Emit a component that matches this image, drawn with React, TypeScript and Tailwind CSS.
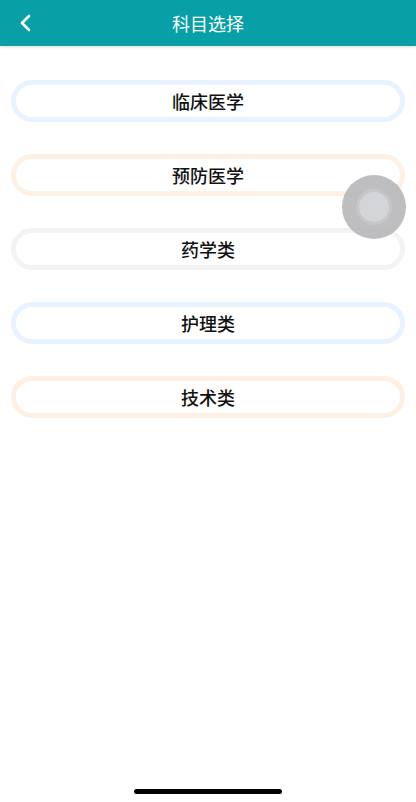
const subjects = [
  { name: '临床医学', ring: 'border-[#e9f2ff]' },
  { name: '预防医学', ring: 'border-[#fdf1e6]' },
  { name: '药学类', ring: 'border-[#f3f3f3]' },
  { name: '护理类', ring: 'border-[#e9f2ff]' },
  { name: '技术类', ring: 'border-[#fdf1e6]' },
]

function App() {
  return (
    <div
      className="relative w-[416px] h-[802px] bg-white overflow-hidden"
      style={{ fontFamily: '"Noto Sans CJK SC", "Noto Sans", sans-serif' }}
    >
      {/* Header */}
      <header className="relative flex items-center justify-center h-[46px] bg-[#089fa6] shadow-[0_1px_3px_rgba(0,0,0,0.15)]">
        <button className="absolute left-[14px] top-[11px] flex items-center justify-center w-6 h-6">
          <svg width="16" height="18" viewBox="0 0 16 18" fill="none" stroke="#fff" strokeWidth="2.6" strokeLinecap="round" strokeLinejoin="round">
            <path d="M11 2 L4 9 L11 16" />
          </svg>
        </button>
        <h1 className="text-[18px] leading-none text-white">科目选择</h1>
      </header>

      {/* Subject list */}
      <div className="flex flex-col gap-[32px] px-[11px] pt-[34px]">
        {subjects.map((s) => (
          <button
            key={s.name}
            className={`flex items-center justify-center h-[42px] rounded-full border-[5px] bg-white ${s.ring}`}
          >
            <span className="text-[18px] font-medium text-[#111]">{s.name}</span>
          </button>
        ))}
      </div>

      {/* Floating assistive button */}
      <div className="absolute left-[342px] top-[175px] flex items-center justify-center w-[64px] h-[64px] rounded-full bg-[#b3b3b5]/85">
        <div className="flex items-center justify-center w-[36px] h-[36px] rounded-full bg-[#c6c6c8]">
          <div className="w-[30px] h-[30px] rounded-full bg-[#d4d5d8]" />
        </div>
      </div>

      {/* Home indicator */}
      <div className="absolute left-[134px] bottom-[8px] w-[148px] h-[5px] rounded-full bg-black" />
    </div>
  )
}

export default App
